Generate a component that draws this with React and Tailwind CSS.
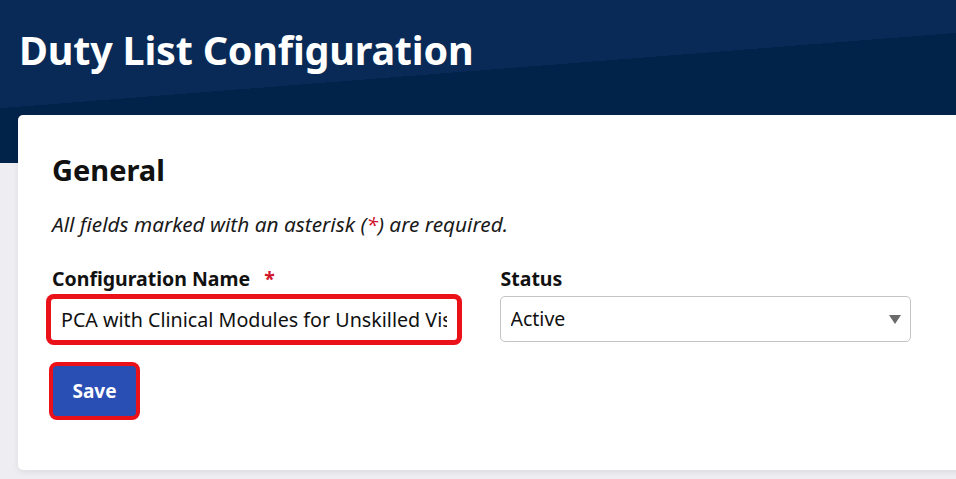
import { useState } from "react";

export default function App() {
  const [name, setName] = useState("PCA with Clinical Modules for Unskilled Visits");
  const [status, setStatus] = useState("Active");

  return (
    <div
      className="min-h-[479px] overflow-hidden bg-[#eeeef2] text-[#111]"
      style={{ fontFamily: '"Noto Sans", "Open Sans", sans-serif' }}
    >
      <header className="h-[163px] bg-[linear-gradient(175.5deg,#092a56_45.4%,#01234a_45.4%)] px-[19px] pt-[25px]">
        <h1 className="text-[39.5px] font-bold leading-[50px] tracking-[-0.2px] text-white">
          Duty List Configuration
        </h1>
      </header>

      <div className="relative -mt-[48px] ml-[18px] mr-[-20px] h-[355px] rounded-[5px] bg-white px-[34px] pt-[35px] shadow-[0_2px_6px_rgba(0,0,0,0.08)]">
        <h2 className="text-[29px] font-bold leading-[40px]">General</h2>

        <p className="mt-[20px] text-[20.8px] italic leading-[28px] text-[#1a1a1a]">
          All fields marked with an asterisk (<span className="text-[#d0142c]">*</span>) are required.
        </p>

        <div className="mt-[27px] grid w-[857px] grid-cols-2 gap-x-[40px]">
          <div>
            <label className="block text-[19.5px] font-bold leading-[28px]">
              Configuration Name
              <span className="ml-[14px] text-[#d0142c]">*</span>
            </label>
            <input
              value={name}
              onChange={(e) => setName(e.target.value)}
              className="-ml-[1px] mt-[6px] h-[41px] w-[406px] rounded-[3px] bg-white px-[10px] text-[19.7px] text-[#111] outline-none ring-[5px] ring-[#ea1119]"
            />
          </div>
          <div>
            <label className="block text-[19.5px] font-bold leading-[28px]">Status</label>
            <div className="relative mt-[3px] w-[411px] -ml-[1px]">
              <select
                value={status}
                onChange={(e) => setStatus(e.target.value)}
                className="h-[46px] w-full appearance-none rounded-[5px] border border-[#c4c4c4] bg-white px-[10px] text-[19.5px] text-[#111] outline-none"
              >
                <option>Active</option>
                <option>Inactive</option>
              </select>
              <svg
                className="pointer-events-none absolute right-[10px] top-[19px]"
                width="12"
                height="9"
                viewBox="0 0 12 9"
              >
                <path d="M0 0h12L6 9z" fill="#6b6b6b" />
              </svg>
            </div>
          </div>
        </div>

        <button className="mt-[24px] ml-[1px] h-[50px] w-[83px] rounded-[4px] bg-[#2a4fb4] text-[19px] font-bold text-white ring-4 ring-[#ea1119]">
          Save
        </button>
      </div>
    </div>
  );
}
